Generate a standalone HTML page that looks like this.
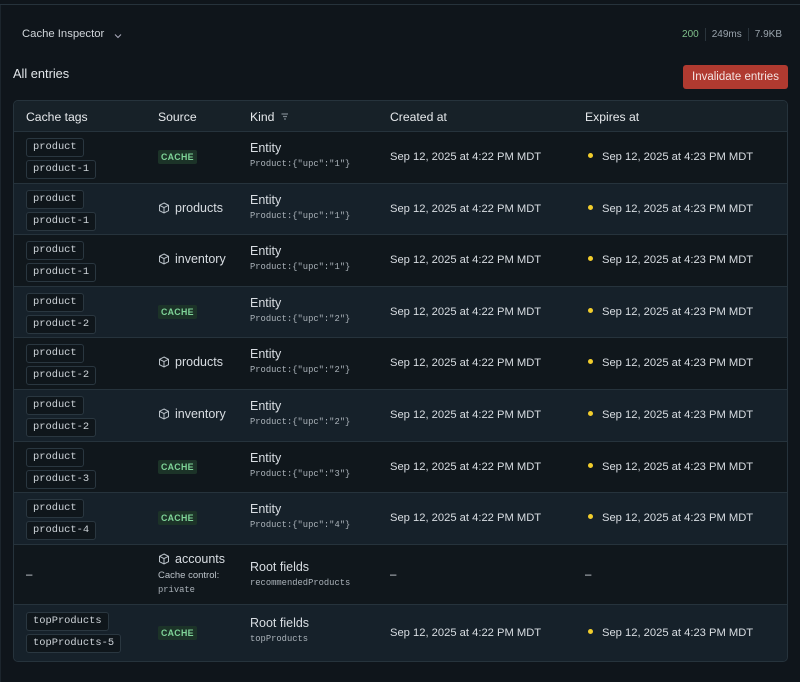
<!DOCTYPE html>
<html><head><style>
*{margin:0;padding:0;box-sizing:border-box}
body{width:800px;height:682px;background:#0f151b;font-family:"Liberation Sans",sans-serif;color:#d8dde2;position:relative;overflow:hidden}
.topline{position:absolute;left:0;top:0;width:800px;height:5px;border-bottom:1px solid #26323b}
.leftline{position:absolute;left:0;top:5px;width:1px;height:677px;background:#1c252d}
.title{position:absolute;left:22px;top:28px;font-size:11.3px;color:#d0d5da}
.stats{position:absolute;right:12px;top:28px;font-size:10px;color:#9aa4ad;display:flex}
.stats span{padding:0 6px;border-left:1px solid #2a343c;line-height:13px}
.stats span:first-child{border:none;color:#7fbf8a}
.h{position:absolute;left:13px;top:66px;font-size:12.8px;color:#e2e6ea}
.btn{position:absolute;left:683px;top:65px;width:105px;height:24px;background:#b03a30;border-radius:3px;color:#f4e4e2;font-size:11.5px;text-align:center;line-height:24px}
.tbl{position:absolute;left:13px;top:100px;width:775px;height:562px;border:1px solid #26333c;border-radius:5px;overflow:hidden;background:#141c22}
.row{position:absolute;left:0;width:775px;border-top:1px solid #26333c}
.hd{top:0;height:30px;border:none;background:#172128}
.o{background:#10171c}.e{background:#16212a}
.c{position:absolute;font-size:11.5px}
.hd .c{top:9px;font-size:12.2px;color:#e6e9ec}
.tag{display:block;font-family:"Liberation Mono",monospace;font-size:10.4px;border:1px solid #2a3740;border-radius:3px;padding:2px 6px;background:#0f161b;color:#cdd3d8;width:max-content;margin-bottom:3px;line-height:13px}
.cache{font-size:8.8px;font-weight:bold;color:#7fd498;background:#1c3328;padding:2px 3px;border-radius:2px;letter-spacing:.3px}
.mono{font-family:"Liberation Mono",monospace;font-size:8.8px;color:#aab2b9}
.dot{display:inline-block;width:5px;height:5px;border-radius:50%;background:#f2cd2c;margin-right:9px;margin-left:0;vertical-align:2px}
svg{vertical-align:-2px;margin-right:5px}
</style></head><body>
<div class="topline"></div><div class="leftline"></div>
<div class="title">Cache Inspector&nbsp;&nbsp;&nbsp;<svg width="8" height="6" viewBox="0 0 8 6"><path d="M1 1.5L4 4.5L7 1.5" stroke="#aab" fill="none" stroke-width="1"/></svg></div>
<div class="stats"><span>200</span><span>249ms</span><span>7.9KB</span></div>
<div class="h">All entries</div>
<div class="btn">Invalidate entries</div>
<div class="tbl">
<div class="row hd"><div class="c" style="left:12px">Cache tags</div><div class="c" style="left:144px">Source</div><div class="c" style="left:236px">Kind &nbsp;<svg width="9" height="9" viewBox="0 0 9 9" style="vertical-align:-1px"><path d="M0.5 1H7M2 3.5H6M3 6H5" stroke="#7a848c" stroke-width="1.3" fill="none"/></svg></div><div class="c" style="left:376px">Created at</div><div class="c" style="left:571px">Expires at</div></div>
<div id="rows"></div>
</div>
<script>
var box='<svg width="12" height="12" viewBox="0 0 12 12" fill="none" stroke="#bbc3ca" stroke-width="1"><path d="M6 1L10.5 3.3V8.7L6 11L1.5 8.7V3.3Z M1.5 3.3L6 5.6L10.5 3.3 M6 5.6V11"/></svg>';
var d=[["product-1","C","1"],["product-1","products","1"],["product-1","inventory","1"],["product-2","C","2"],["product-2","products","2"],["product-2","inventory","2"],["product-3","C","3"],["product-4","C","4"]];
var h='',y=30;
d.forEach(function(r,i){
 h+='<div class="row '+(i%2?'e':'o')+'" style="top:'+y+'px;height:52px">';
 h+='<div class="c" style="left:12px;top:6px"><span class="tag">product</span><span class="tag">'+r[0]+'</span></div>';
 h+='<div class="c" style="left:144px;top:'+(r[1]=="C"?19:17)+'px">'+(r[1]=="C"?'<span class="cache">CACHE</span>':box+'<span style="font-size:12.5px">'+r[1]+'</span>')+'</div>';
 h+='<div class="c" style="left:236px;top:9px;font-size:12.5px">Entity<div class="mono" style="margin-top:4px">Product:{"upc":"'+r[2]+'"}</div></div>';
 h+='<div class="c" style="left:376px;top:19px;font-size:11.2px">Sep 12, 2025 at 4:22 PM MDT</div>';
 h+='<div class="c" style="left:574px;top:19px;font-size:11.2px"><span class="dot"></span>Sep 12, 2025 at 4:23 PM MDT</div></div>';
 y+=51.6;
});
y=443;
h+='<div class="row o" style="top:'+y+'px;height:60px"><div class="c" style="left:12px;top:24px">–</div><div class="c" style="left:144px;top:7px">'+box+'<span style="font-size:12.5px">accounts</span><div style="font-size:9.5px;color:#bcc3c9;margin-top:4px">Cache control:</div><div class="mono" style="margin-top:4px">private</div></div><div class="c" style="left:236px;top:15px;font-size:12.5px">Root fields<div class="mono" style="margin-top:4px">recommendedProducts</div></div><div class="c" style="left:376px;top:24px">–</div><div class="c" style="left:571px;top:24px">–</div></div>';
h+='<div class="row e" style="top:503px;height:60px"><div class="c" style="left:12px;top:7px"><span class="tag">topProducts</span><span class="tag">topProducts-5</span></div><div class="c" style="left:144px;top:22px"><span class="cache">CACHE</span></div><div class="c" style="left:236px;top:11px;font-size:12.5px">Root fields<div class="mono" style="margin-top:4px">topProducts</div></div><div class="c" style="left:376px;top:22px;font-size:11.2px">Sep 12, 2025 at 4:22 PM MDT</div><div class="c" style="left:574px;top:22px;font-size:11.2px"><span class="dot"></span>Sep 12, 2025 at 4:23 PM MDT</div></div>';
document.getElementById('rows').innerHTML=h;
</script>
</body></html>
